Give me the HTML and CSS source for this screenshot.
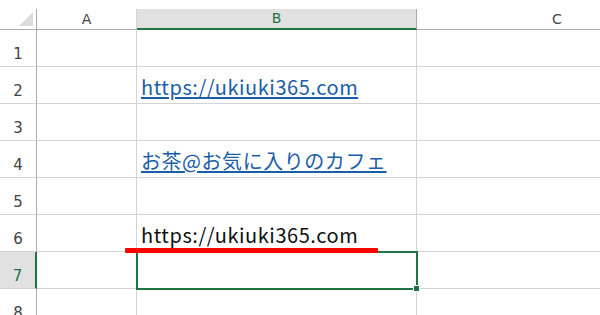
FILE: index.html
```html
<!DOCTYPE html>
<html lang="ja">
<head>
    <meta charset="UTF-8">
    <title>Excel sheet</title>
    <link rel="stylesheet" href="styles.css">
</head>
<body>
    <div class="sheet">
        <div class="corner"><span class="tri"></span></div>
        <div class="col-head">A</div>
        <div class="col-head sel">B</div>
        <div class="col-head last">C</div>

        <div class="row-head">1</div><div class="cell"></div><div class="cell"></div><div class="cell last"></div>
        <div class="row-head">2</div><div class="cell"></div><div class="cell"><a class="link">https://ukiuki365.com</a></div><div class="cell last"></div>
        <div class="row-head">3</div><div class="cell"></div><div class="cell"></div><div class="cell last"></div>
        <div class="row-head">4</div><div class="cell"></div><div class="cell"><a class="link">お茶@お気に入りのカフェ</a></div><div class="cell last"></div>
        <div class="row-head">5</div><div class="cell"></div><div class="cell"></div><div class="cell last"></div>
        <div class="row-head">6</div><div class="cell"></div><div class="cell"><span class="plain">https://ukiuki365.com</span></div><div class="cell last"></div>
        <div class="row-head sel">7</div><div class="cell"></div><div class="cell active"><span class="handle"></span></div><div class="cell last"></div>
        <div class="row-head">8</div><div class="cell"></div><div class="cell"></div><div class="cell last"></div>

        <div class="mark"></div>
    </div>
</body>
</html>
```

FILE: styles.css
```css
html, body {
    margin: 0;
    background: #fff;
    overflow: hidden;
}
body {
    padding-top: 9px;
    height: 315px;
    box-sizing: border-box;
    font-family: "Noto Sans CJK JP", "Noto Sans", sans-serif;
}
.sheet {
    position: relative;
    display: grid;
    grid-template-columns: 37px 100px 280px 1fr;
    grid-template-rows: 21px repeat(8, 37px);
    width: 600px;
}
.corner {
    border-right: 1px solid #ababab;
    border-bottom: 1px solid #ababab;
    position: relative;
}
.tri {
    position: absolute;
    right: 3px;
    bottom: 3px;
    width: 0;
    height: 0;
    border-left: 14px solid transparent;
    border-bottom: 14px solid #dcdcdc;
}
.col-head {
    border-right: 1px solid #d4d4d4;
    border-bottom: 1px solid #ababab;
    font-family: "DejaVu Sans", sans-serif;
    font-size: 14px;
    color: #444;
    text-align: center;
    line-height: 20px;
}
.col-head.sel {
    background: #e1e1e1;
    color: #217346;
    border-bottom: 2px solid #217346;
    line-height: 19px;
    border-right-color: #ababab;
}
.col-head.last {
    border-right: none;
    text-align: left;
    padding-left: 135px;
}
.row-head {
    border-right: 1px solid #ababab;
    border-bottom: 1px solid #d4d4d4;
    font-family: "DejaVu Sans", sans-serif;
    font-size: 15px;
    color: #444;
    display: flex;
    align-items: flex-end;
    justify-content: center;
    padding-bottom: 3px;
    box-sizing: border-box;
}
.row-head.sel {
    background: #e1e1e1;
    color: #217346;
    border-right: 2px solid #217346;
}
.cell {
    border-right: 1px solid #d4d4d4;
    border-bottom: 1px solid #d4d4d4;
    display: flex;
    align-items: flex-end;
    padding: 0 0 6px 4px;
    box-sizing: border-box;
    white-space: nowrap;
    position: relative;
}
.cell.last {
    border-right: none;
}
.link, .plain {
    font-size: 20px;
    line-height: 20px;
    letter-spacing: 0.55px;
}
.link {
    color: #1a5ea8;
    text-decoration: underline;
    text-underline-offset: 2px;
}
.plain {
    color: #111;
}
.cell.active {
    outline: 2px solid #217346;
    outline-offset: -1px;
    z-index: 2;
}
.handle {
    position: absolute;
    right: -4px;
    bottom: -4px;
    width: 5px;
    height: 5px;
    background: #217346;
    border: 1px solid #fff;
}
.mark {
    position: absolute;
    left: 125px;
    top: 239px;
    width: 253px;
    height: 5px;
    background: #ff0000;
    border-radius: 1px;
    z-index: 3;
}
```
